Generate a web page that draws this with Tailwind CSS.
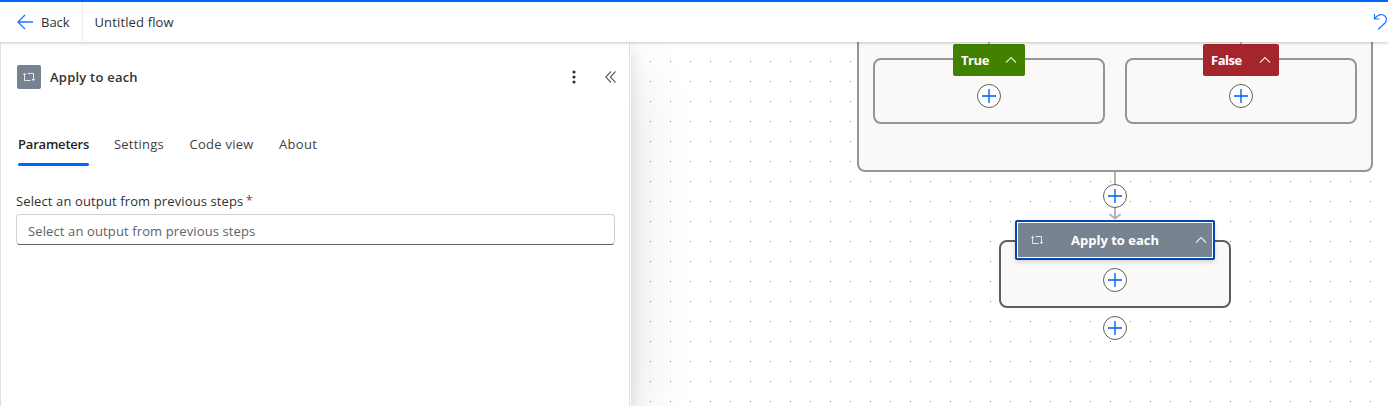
<!DOCTYPE html>
<html lang="en">
<head>
<meta charset="utf-8">
<title>Untitled flow</title>
<script src="https://cdn.jsdelivr.net/npm/@tailwindcss/browser@4"></script>
</head>
<body class="h-[406px] w-[1388px] overflow-hidden bg-white font-['Open_Sans','Noto_Sans',sans-serif] text-[13px] leading-5 text-[#323130]">
<svg class="hidden">
  <symbol id="loop" viewBox="0 0 12 10"><path d="M4.500 1.500H10.500v6M7.500 8.500H1.500v-6" fill="none" stroke="currentColor" stroke-width=".9"/><path d="M0 3 1.500.8 3.200 3zM8.800 7l1.700 2.200L12 7z" fill="currentColor"/></symbol>
  <symbol id="chev" viewBox="0 0 12 8"><path d="M1 6.5 6 1.5l5 5" fill="none" stroke="currentColor" stroke-width="1.100"/></symbol>
  <symbol id="add" viewBox="0 0 24 24"><circle cx="12" cy="12" r="11.5" fill="#fff" stroke="#605e5c"/><path d="M12 5v14" stroke="#4a93ff" stroke-width="2"/><path d="M5 12h14" stroke="#3385ff" stroke-width="2"/><path d="M12 11v2" stroke="#0d6bff" stroke-width="2"/></symbol>
</svg>
<div class="flex h-full flex-col border-l border-[#e1e1e1]">
  <header class="relative z-20 -ml-px flex h-[42px] shrink-0 items-center border-t-2 border-[#0066ff] bg-white shadow-[0_1px_3px_rgba(0,0,0,0.22)]">
    <div class="flex h-full w-[83px] items-center border-r border-[#edebe9] pl-[17px]">
      <svg class="size-4 shrink-0" viewBox="0 0 16 16" fill="none" stroke="#1a75ff" stroke-width="1.3"><path d="M16 8H1M8 1 1 8l7 7"/></svg>
      <span class="ml-2">Back</span>
    </div>
    <span class="ml-[11.5px] tracking-[0.14px]">Untitled flow</span>
    <svg class="absolute left-[1373px] top-[11px] h-[17px] w-[15px]" viewBox="0 0 15 17" fill="none" stroke="#1a75ff" stroke-width="1.2"><path d="M1.500 1v5h5M1.700 5.800C4 2.500 7.500.8 10.500 2c3 1.300 4 5 1.500 8L5 16.500"/></svg>
  </header>
  <div class="flex min-h-0 flex-1">
    <aside class="relative z-10 flex w-[630px] shrink-0 flex-col border-r border-white bg-white shadow-[0_5px_14px_rgba(0,0,0,0.10),0_26px_58px_rgba(0,0,0,0.13)] [clip-path:inset(0_-100px_0_0)]">
     <div class="flex h-full flex-col border-r border-[#e1e1e1] pl-[15px] pr-[14px]">
      <div class="mt-[23px] flex h-6 items-center pl-px">
        <span class="flex size-6 items-center justify-center rounded-[2px] bg-[#778391] text-white/90"><svg class="h-[10px] w-3"><use href="#loop"/></svg></span>
        <h1 class="ml-[9px] text-[13px] font-semibold tracking-[0.22px]">Apply to each</h1>
        <svg class="ml-auto h-[14px] w-1" viewBox="0 0 4 14" fill="#323130"><circle cx="2" cy="2" r="1.600"/><circle cx="2" cy="7" r="1.600"/><circle cx="2" cy="12" r="1.600"/></svg>
        <svg class="ml-[29px] mr-[-0.5px] h-3 w-[11px]" viewBox="0 0 11 12" fill="none" stroke="#605e5c" stroke-width="1.100"><path d="M6 .5.8 6 6 11.500M10.500.5 5.300 6l5.200 5.500"/></svg>
      </div>
      <nav class="mt-[45px] flex h-[33px] gap-[25px] pl-0.5 text-[#424242]">
        <span class="w-[71px] font-semibold text-[#242424]"><span class="block whitespace-nowrap tracking-[-0.2px]">Parameters</span><span class="mt-[9px] block h-[3px] rounded-full bg-[#0066ff]"></span></span>
        <span class="w-[50.5px] whitespace-nowrap tracking-[0.2px]">Settings</span>
        <span class="w-[64.500px] whitespace-nowrap tracking-[0.25px]">Code view</span>
        <span class="tracking-[0.3px]">About</span>
      </nav>
      <label class="mt-6 flex h-5 items-center text-[#323130]"><span class="tracking-[0.12px]">Select an output from previous steps</span><span class="ml-[2.5px] text-[12px] text-[#a4262c]">*</span></label>
      <div class="mt-[3px] flex h-[31px] w-[599px] items-center rounded-[4px] border border-[#d1d1d1] border-b-[#616161] pl-[11px] pt-[3px] tracking-[0.12px] text-[#616161]">Select an output from previous steps</div>
     </div>
    </aside>
    <main class="relative flex-1 overflow-hidden bg-white">
      <svg class="absolute inset-0 h-full w-full"><pattern id="dots" x="19" y="19" width="20" height="20" patternUnits="userSpaceOnUse"><rect width="1" height="1" fill="#81818a"/></pattern><rect width="100%" height="100%" fill="url(#dots)"/></svg>
      <div class="absolute left-[226px] top-[-20px] h-[150px] w-[516px] rounded-lg border-2 border-[#979593] bg-[#faf9f8]"></div>
      <div class="absolute left-[357px] top-0 h-2 w-0.5 bg-[#b1b1b7]"></div>
      <div class="absolute left-[609px] top-0 h-2 w-0.5 bg-[#b1b1b7]"></div>
      <div class="absolute left-[242px] top-4 h-[66px] w-[232px] rounded-lg border-2 border-[#979593]"></div>
      <div class="absolute left-[494px] top-4 h-[66px] w-[232px] rounded-lg border-2 border-[#979593]"></div>
      <div class="absolute left-[322px] top-0.5 flex h-8 w-[72px] items-center justify-between rounded-[2px] bg-[#428000] pl-2 pr-2 font-bold tracking-[-0.45px] text-white"><span>True</span><svg class="h-2 w-3 opacity-85"><use href="#chev"/></svg></div>
      <div class="absolute left-[572px] top-0.5 flex h-8 w-[76px] items-center justify-between rounded-[2px] bg-[#a4262c] pl-2 pr-2 font-bold tracking-[-0.45px] text-white"><span>False</span><svg class="h-2 w-3 opacity-85"><use href="#chev"/></svg></div>
      <svg class="absolute left-[346px] top-[42px] size-6"><use href="#add"/></svg>
      <svg class="absolute left-[598px] top-[42px] size-6"><use href="#add"/></svg>
      <svg class="absolute left-[477px] top-[130px] h-12 w-[14px]" viewBox="0 0 14 48" fill="none" stroke="#b1b1b7" stroke-width="2"><path d="M7 0v47"/><path d="M2 42.500 7 46.500l5-4" stroke-linecap="round" stroke-linejoin="round"/></svg>
      <svg class="absolute left-[472px] top-[142px] size-6"><use href="#add"/></svg>
      <div class="absolute left-[368px] top-[198px] h-[68px] w-[232px] rounded-lg border-2 border-[#605e5c] bg-[#faf9f8]"></div>
      <div class="absolute left-[384px] top-[178px] flex h-10 w-[200px] items-center rounded-[2px] border-2 border-[#0047b3] bg-[#778391] pl-[14px] pr-1 font-bold text-white shadow-[inset_0_0_0_1px_#fff,0_2px_4px_rgba(0,0,0,0.15)]"><svg class="h-[10px] w-3 opacity-90"><use href="#loop"/></svg><span class="ml-7 whitespace-nowrap">Apply to each</span><svg class="ml-auto mr-0.5 h-2 w-3 opacity-85"><use href="#chev"/></svg></div>
      <svg class="absolute left-[472px] top-[226px] size-6"><use href="#add"/></svg>
      <svg class="absolute left-[472px] top-[274px] size-6"><use href="#add"/></svg>
    </main>
  </div>
</div>
</body>
</html>
